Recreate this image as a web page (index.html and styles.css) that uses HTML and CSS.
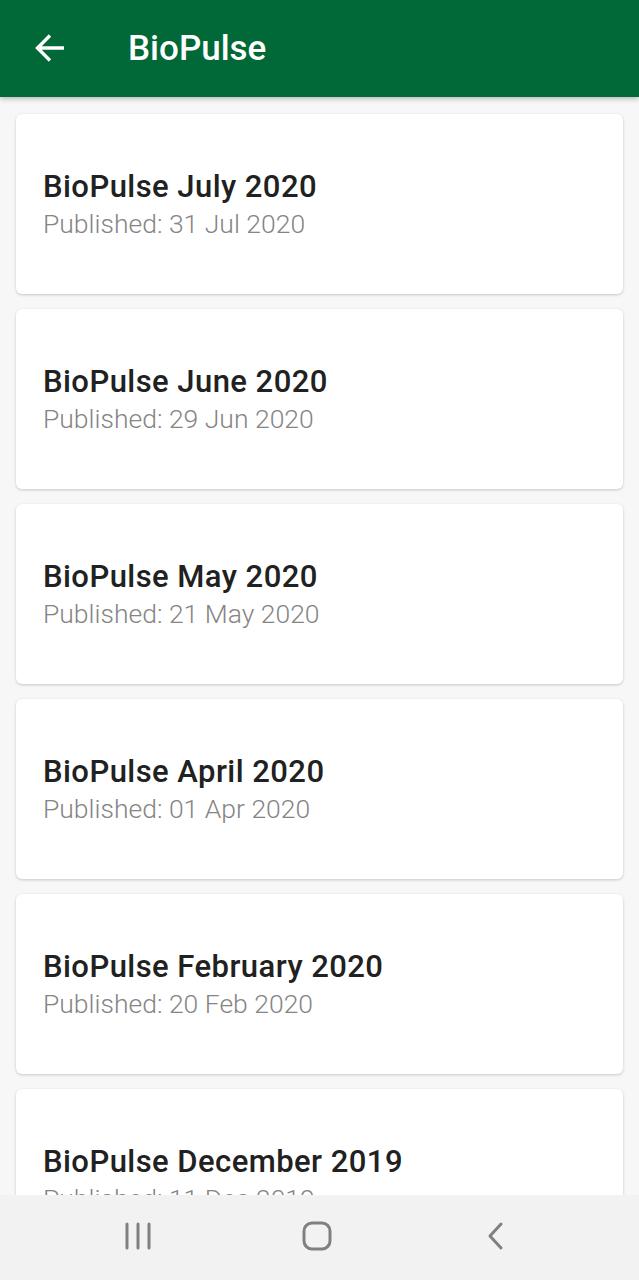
FILE: index.html
```html
<!DOCTYPE html>
<html>
<head>
	<meta charset="utf-8" />
	<meta name="viewport" content="width=device-width, initial-scale=1.0" />
	<title>BioPulse</title>
	<link rel="stylesheet" href="styles.css">
</head>
<body>
	<div class="appBar">
		<svg class="back" width="32" height="32" viewBox="0 0 32 32">
			<path d="M30 16H4M16 3.5L3.5 16L16 28.5" stroke="#ffffff" stroke-width="3.4" fill="none"/>
		</svg>
		<span class="appTitle">BioPulse</span>
	</div>

	<div class="list">
		<div class="card">
			<p class="title">BioPulse July 2020</p>
			<p class="date">Published: 31 Jul 2020</p>
		</div>
		<div class="card">
			<p class="title">BioPulse June 2020</p>
			<p class="date">Published: 29 Jun 2020</p>
		</div>
		<div class="card">
			<p class="title">BioPulse May 2020</p>
			<p class="date">Published: 21 May 2020</p>
		</div>
		<div class="card">
			<p class="title">BioPulse April 2020</p>
			<p class="date">Published: 01 Apr 2020</p>
		</div>
		<div class="card">
			<p class="title">BioPulse February 2020</p>
			<p class="date">Published: 20 Feb 2020</p>
		</div>
		<div class="card">
			<p class="title">BioPulse December 2019</p>
			<p class="date">Published: 11 Dec 2019</p>
		</div>
	</div>

	<div class="navBar">
		<svg width="30" height="30" viewBox="0 0 30 30">
			<path d="M3 3v24M14 3v24M25 3v24" stroke="#808080" stroke-width="3" stroke-linecap="round" fill="none"/>
		</svg>
		<svg width="32" height="32" viewBox="0 0 32 32">
			<rect x="2" y="3" width="26" height="26" rx="8" stroke="#808080" stroke-width="3" fill="none"/>
		</svg>
		<svg class="navBack" width="22" height="30" viewBox="0 0 22 30">
			<path d="M15 3L4 15l11 12" stroke="#808080" stroke-width="3" stroke-linecap="round" stroke-linejoin="round" fill="none"/>
		</svg>
	</div>
</body>
</html>
```

FILE: styles.css
```css
*{
	margin: 0;
	padding: 0;
	box-sizing: border-box;
}
body{
	background: #f7f7f7;
	font-family: Roboto, "Liberation Sans", sans-serif;
	height: 1280px;
	overflow: hidden;
}
.appBar{
	height: 97px;
	background: #016838;
	display: flex;
	align-items: center;
	padding-left: 34px;
	box-shadow: 0 2px 5px rgba(0,0,0,0.25);
	position: relative;
	z-index: 2;
}
.back{
	margin-top: -1px;
}
.appTitle{
	color: #ffffff;
	font-size: 35px;
	font-weight: 500;
	margin-left: 62px;
	margin-top: -1px;
}
.list{
	display: flex;
	flex-direction: column;
	gap: 15px;
	padding: 17px 16px 0 16px;
}
.card{
	height: 180px;
	flex-shrink: 0;
	background: #ffffff;
	border-radius: 6px;
	box-shadow: 0 1px 3px rgba(0,0,0,0.2);
	display: flex;
	flex-direction: column;
	justify-content: center;
	padding-left: 27px;
	padding-top: 2px;
}
.title{
	font-size: 31px;
	font-weight: 500;
	color: #212121;
	line-height: 37px;
	letter-spacing: 0.45px;
}
.date{
	font-size: 26.5px;
	font-weight: 300;
	color: #858585;
	line-height: 37px;
}
.navBar{
	position: fixed;
	left: 0;
	bottom: 0;
	width: 100%;
	height: 85px;
	background: #f2f2f2;
	display: flex;
	align-items: center;
	gap: 148px;
	padding-left: 124px;
	padding-bottom: 4px;
	z-index: 3;
}
.navBack{
	margin-left: 4px;
}
```
